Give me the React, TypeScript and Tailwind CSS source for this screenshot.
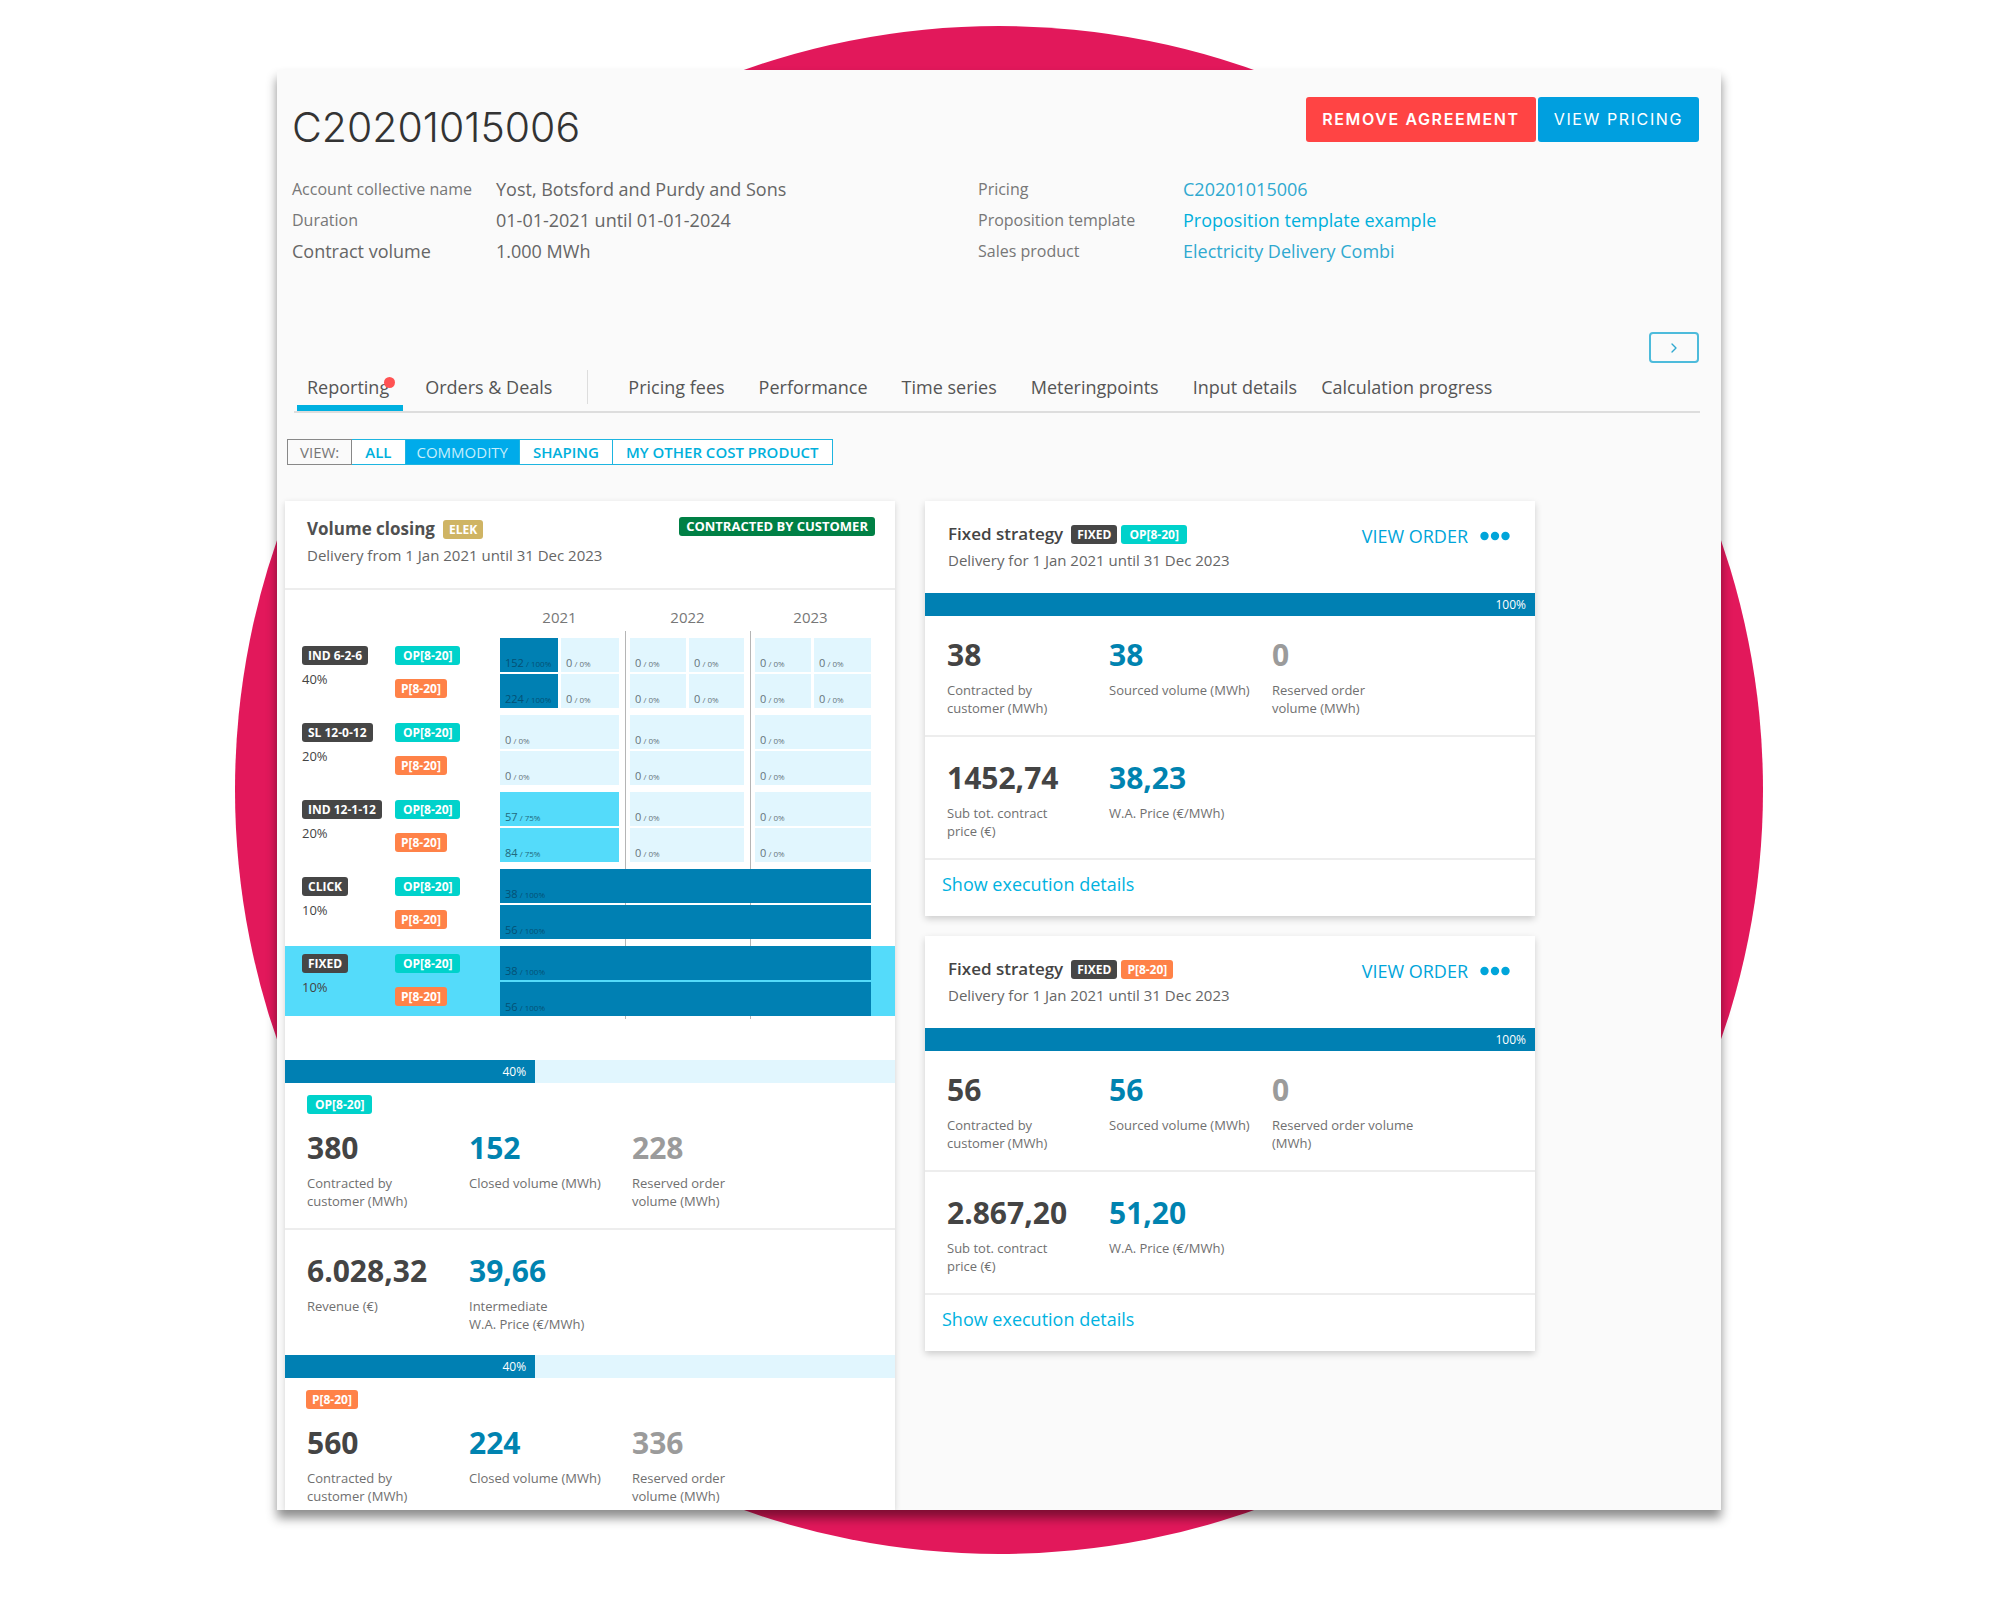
import { Fragment } from 'react';
import type { ReactNode } from 'react';
import clsx from 'clsx';
import { ChevronRight } from 'lucide-react';

type Tone = 'dark' | 'teal' | 'orange' | 'gold' | 'green';

interface Stat {
    value: string;
    label: string;
    color: string;
}

interface Cell {
    volume: number;
    percent: number;
    span: number;
    fill: 'full' | 'partial' | 'empty';
}

interface Strategy {
    name: string;
    share: string;
    offPeak: Cell[];
    peak: Cell[];
    active?: boolean;
}

const OFF_PEAK = 'OP[8-20]';
const PEAK = 'P[8-20]';

const DARK = 'text-[#444444]';
const BLUE = 'text-[#0083b0]';
const GRAY = 'text-[#9b9b9b]';

const tones: Record<Tone, string> = {
    dark: 'bg-[#464646] px-[6px] text-[12px]',
    teal: 'bg-[#00d2cb] px-2 text-[12px]',
    orange: 'bg-[#ff8248] px-[6px] text-[12px]',
    gold: 'bg-[#cfb464] px-[6px] text-[12px]',
    green: 'bg-[#008045] px-[7px] text-[13px]',
};

const fills = {
    full: 'bg-[#0080b3] text-[#045175]',
    partial: 'bg-[#54dbfa] text-[#22697c]',
    empty: 'bg-[#e1f6fe] text-[#66757c]',
};

const emptyCells = (count: number, span: number): Cell[] =>
    Array.from({ length: count }, () => ({ volume: 0, percent: 0, span, fill: 'empty' as const }));

const full = (volume: number, span: number): Cell => ({ volume, percent: 100, span, fill: 'full' });
const partial = (volume: number, percent: number): Cell => ({ volume, percent, span: 2, fill: 'partial' });

const strategies: Strategy[] = [
    {
        name: 'IND 6-2-6',
        share: '40%',
        offPeak: [full(152, 1), ...emptyCells(5, 1)],
        peak: [full(224, 1), ...emptyCells(5, 1)],
    },
    { name: 'SL 12-0-12', share: '20%', offPeak: emptyCells(3, 2), peak: emptyCells(3, 2) },
    {
        name: 'IND 12-1-12',
        share: '20%',
        offPeak: [partial(57, 75), ...emptyCells(2, 2)],
        peak: [partial(84, 75), ...emptyCells(2, 2)],
    },
    { name: 'CLICK', share: '10%', offPeak: [full(38, 6)], peak: [full(56, 6)] },
    { name: 'FIXED', share: '10%', offPeak: [full(38, 6)], peak: [full(56, 6)], active: true },
];

const Badge = ({ tone, children }: { tone: Tone; children: ReactNode }) => (
    <span
        className={clsx(
            'block w-fit rounded-[3px] leading-[19px] font-bold whitespace-nowrap text-white',
            tones[tone]
        )}
    >
        {children}
    </span>
);

const ProgressBar = ({ label, width }: { label: string; width: string }) => (
    <div className="h-[23px] bg-[#e1f6fe]">
        <div
            className="h-full bg-[#0080b3] pr-[9px] text-right text-[12px] leading-[24px] text-white"
            style={{ width }}
        >
            {label}
        </div>
    </div>
);

const Stats = ({ items }: { items: Stat[] }) => (
    <dl className="grid grid-cols-[162px_163px_1fr] pl-[22px]">
        {items.map((item) => (
            <div key={item.label} className="flex flex-col-reverse justify-end">
                <dt className="mt-2 text-[13px] leading-[18px] whitespace-pre-line text-[#707070]">{item.label}</dt>
                <dd className={clsx('text-[30px] leading-[36px] font-bold', item.color)}>{item.value}</dd>
            </div>
        ))}
    </dl>
);

const HalfYearCell = ({ cell, start, last }: { cell: Cell; start: number; last: boolean }) => {
    const end = start + cell.span;
    return (
        <td
            colSpan={cell.span}
            className={clsx(
                'p-0 align-top',
                start % 2 === 1 && 'pl-px',
                start % 2 === 0 && start > 0 && 'pl-[5px]',
                end % 2 === 1 && 'pr-[2px]',
                end % 2 === 0 && end < 6 && 'pr-[6px]',
                last ? 'pb-0' : 'pb-[2px]'
            )}
        >
            <div className={clsx('flex h-[34px] items-end pb-px pl-[5px] text-[11px] leading-[15px]', fills[cell.fill])}>
                <span>
                    {cell.volume}
                    <span className="text-[8px]"> / {cell.percent}%</span>
                </span>
            </div>
        </td>
    );
};

const HalfYearCells = ({ cells, last = false }: { cells: Cell[]; last?: boolean }) => {
    let position = 0;
    return (
        <>
            {cells.map((cell) => {
                const start = position;
                position += cell.span;
                return <HalfYearCell key={start} cell={cell} start={start} last={last} />;
            })}
        </>
    );
};

const StrategyTable = () => (
    <table className="isolate w-full table-fixed border-collapse text-left">
        <colgroup>
            <col className="w-[110px]" />
            <col className="w-[105px]" />
            <col className="w-[60px]" />
            <col className="w-[65px]" />
            <col className="w-[63px]" />
            <col className="w-[62px]" />
            <col className="w-[63px]" />
            <col className="w-[58px]" />
            <col />
        </colgroup>
        <thead>
            <tr className="h-[48px] text-[15px] leading-[20px] text-[#777777]">
                <td colSpan={2} />
                <th colSpan={2} className="pt-[17px] pr-[6px] text-center align-top font-normal">2021</th>
                {/* Year dividers run behind the bars down the whole table */}
                {['2022', '2023'].map((year) => (
                    <th
                        key={year}
                        colSpan={2}
                        className="relative pt-[17px] text-center align-top font-normal before:absolute before:top-[41px] before:left-0 before:-z-10 before:h-[388px] before:w-px before:bg-[#b5b5b5]"
                    >
                        {year}
                    </th>
                ))}
                <td />
            </tr>
        </thead>
        <tbody>
            {strategies.map((strategy, index) => (
                <Fragment key={strategy.name}>
                    {index > 0 && (
                        <tr className="h-[7px]">
                            <td colSpan={9} className="p-0" />
                        </tr>
                    )}
                    <tr className={clsx('h-[36px]', strategy.active && 'bg-[#54dbfa]')}>
                        <th rowSpan={2} className="p-0 pt-2 pl-[17px] align-top font-normal">
                            <Badge tone="dark">{strategy.name}</Badge>
                            <div className="mt-1 text-[13px] leading-[20px] text-[#444444]">{strategy.share}</div>
                        </th>
                        <td className="p-0 pt-2 align-top">
                            <Badge tone="teal">{OFF_PEAK}</Badge>
                        </td>
                        <HalfYearCells cells={strategy.offPeak} />
                        <td />
                    </tr>
                    <tr className={clsx('h-[34px]', strategy.active && 'bg-[#54dbfa]')}>
                        <td className="p-0 pt-[5px] align-top">
                            <Badge tone="orange">{PEAK}</Badge>
                        </td>
                        <HalfYearCells cells={strategy.peak} last />
                        <td />
                    </tr>
                </Fragment>
            ))}
        </tbody>
    </table>
);

const VolumeCard = () => (
    <section className="bg-white shadow-[0_2px_6px_rgba(0,0,0,0.16)]">
        <div className="flex h-[89px] items-start justify-between border-b-2 border-[#ededed] pt-4 pr-5 pl-[22px]">
            <div>
                <div className="flex items-center gap-2">
                    <h2 className="text-[17px] leading-[24px] font-bold text-[#505050]">Volume closing</h2>
                    <Badge tone="gold">ELEK</Badge>
                </div>
                <p className="mt-[3px] text-[15px] leading-[22px] text-[#666666]">Delivery from 1 Jan 2021 until 31 Dec 2023</p>
            </div>
            <Badge tone="green">CONTRACTED BY CUSTOMER</Badge>
        </div>

        <StrategyTable />

        <div className="mt-11">
            <ProgressBar label="40%" width="41%" />
        </div>
        <div className="mb-4 pt-3 pl-[22px]">
            <Badge tone="teal">{OFF_PEAK}</Badge>
        </div>
        <Stats
            items={[
                { value: '380', label: 'Contracted by\ncustomer (MWh)', color: DARK },
                { value: '152', label: 'Closed volume (MWh)', color: BLUE },
                { value: '228', label: 'Reserved order\nvolume (MWh)', color: GRAY },
            ]}
        />
        <div className="mt-[18px] border-t-2 border-[#ededed] pt-[23px] pb-[22px]">
            <Stats
                items={[
                    { value: '6.028,32', label: 'Revenue (€)', color: DARK },
                    { value: '39,66', label: 'Intermediate\nW.A. Price (€/MWh)', color: BLUE },
                ]}
            />
        </div>

        <ProgressBar label="40%" width="41%" />
        <div className="mb-4 pt-3 pl-[21px]">
            <Badge tone="orange">{PEAK}</Badge>
        </div>
        <div className="pb-[5px]">
            <Stats
                items={[
                    { value: '560', label: 'Contracted by\ncustomer (MWh)', color: DARK },
                    { value: '224', label: 'Closed volume (MWh)', color: BLUE },
                    { value: '336', label: 'Reserved order\nvolume (MWh)', color: GRAY },
                ]}
            />
        </div>
    </section>
);

interface StrategyCardProps {
    tone: Tone;
    product: string;
    volumes: Stat[];
    prices: Stat[];
}

const StrategyCard = ({ tone, product, volumes, prices }: StrategyCardProps) => (
    <section className="bg-white shadow-[0_3px_7px_rgba(0,0,0,0.18)]">
        <div className="flex h-[92px] items-start justify-between pt-[21px] pr-[25px] pl-[23px]">
            <div>
                <div className="flex items-center gap-1">
                    <h2 className="mr-1 text-[17px] leading-[24px] font-semibold text-[#444444]">Fixed strategy</h2>
                    <Badge tone="dark">FIXED</Badge>
                    <Badge tone={tone}>{product}</Badge>
                </div>
                <p className="mt-[3px] text-[15px] leading-[22px] text-[#666666]">Delivery for 1 Jan 2021 until 31 Dec 2023</p>
            </div>
            <div className="flex items-center gap-3 text-[#00a5da]">
                <a href="#order" className="text-[18px] leading-[28px]">VIEW ORDER</a>
                <button type="button" aria-label="More actions">
                    <svg width="30" height="10" viewBox="0 0 30 10" fill="currentColor">
                        <circle cx="4.5" cy="5" r="4.2" />
                        <circle cx="15" cy="5" r="4.2" />
                        <circle cx="25.5" cy="5" r="4.2" />
                    </svg>
                </button>
            </div>
        </div>
        <ProgressBar label="100%" width="100%" />
        <div className="pt-[21px] pb-[18px]">
            <Stats items={volumes} />
        </div>
        <div className="border-t-2 border-[#ededed] pt-[23px] pb-[18px]">
            <Stats items={prices} />
        </div>
        <div className="border-t-2 border-[#ededed] px-[17px] pt-3 pb-[19px]">
            <button type="button" className="text-[18px] leading-[24px] font-medium text-[#00b2e0]">
                Show execution details
            </button>
        </div>
    </section>
);

const tabGroups = [
    ['Pricing fees', 'Performance', 'Time series', 'Meteringpoints'],
    ['Input details', 'Calculation progress'],
];

const views = ['ALL', 'COMMODITY', 'SHAPING', 'MY OTHER COST PRODUCT'];

const App = () => (
    <div className="min-h-screen overflow-hidden bg-white pt-[70px] pr-[18px] pb-[91px] pl-4 font-['Open_Sans',sans-serif]">
        <div className="relative mx-auto w-full max-w-[1444px]">
            <div className="absolute -inset-x-[42px] top-1/2 aspect-square -translate-y-1/2 rounded-full bg-[#e2185b]" />

            <main className="relative overflow-hidden bg-[#fafafa] pt-[27px] shadow-[0_8px_10px_rgba(0,0,0,0.45)]">
                {/* Header */}
                <header className="flex items-start justify-between pr-[22px] pl-[15px]">
                    <h1 className="font-['Inter',sans-serif] text-[41px] leading-[60px] font-light text-[#333333]">C20201015006</h1>
                    <div className="flex gap-[2px] font-['Inter',sans-serif] text-[16px] leading-[45px] tracking-widest text-white">
                        <button type="button" className="rounded-[3px] bg-[#ff4444] px-4 font-semibold">REMOVE AGREEMENT</button>
                        <button type="button" className="rounded-[3px] bg-[#009fdf] px-4">VIEW PRICING</button>
                    </div>
                </header>

                <div className="mt-[17px] grid grid-cols-[686px_1fr] pl-[15px] leading-[31px]">
                    <dl className="grid grid-cols-[204px_1fr] content-start text-[18px] text-[#666666]">
                        <dt className="text-[16px] text-[#777777]">Account collective name</dt>
                        <dd>Yost, Botsford and Purdy and Sons</dd>
                        <dt className="text-[16px] text-[#777777]">Duration</dt>
                        <dd>01-01-2021 until 01-01-2024</dd>
                        <dt>Contract volume</dt>
                        <dd>1.000 MWh</dd>
                    </dl>
                    <dl className="grid grid-cols-[205px_1fr] content-start text-[18px] text-[#2fa9d0]">
                        <dt className="text-[16px] text-[#777777]">Pricing</dt>
                        <dd><a href="#pricing">C20201015006</a></dd>
                        <dt className="text-[16px] text-[#777777]">Proposition template</dt>
                        <dd><a href="#template" className="font-medium text-[#00b0dc]">Proposition template example</a></dd>
                        <dt className="text-[16px] text-[#777777]">Sales product</dt>
                        <dd><a href="#product">Electricity Delivery Combi</a></dd>
                    </dl>
                </div>

                <div className="mt-[65px] flex justify-end pr-[22px]">
                    <button
                        type="button"
                        aria-label="Next"
                        className="flex h-[31px] w-[50px] items-center justify-center rounded-[4px] border-2 border-[#4dbbdb] text-[#2fa9d0]"
                    >
                        <ChevronRight size={16} />
                    </button>
                </div>

                {/* Tabs */}
                <nav className="mr-[21px] ml-[17px] flex h-[50px] items-center border-b-2 border-[#dddddd] pl-[3px] text-[18px] leading-[48px] text-[#555555]">
                    <a href="#reporting" className="relative h-[48px] border-b-6 border-[#00b0e0] px-[10px] pr-[14px] font-medium">
                        Reporting
                        <span className="absolute top-[14px] right-2 h-[11px] w-[11px] rounded-full bg-[#ff5252]" />
                    </a>
                    <a href="#orders" className="ml-[22px]">Orders &amp; Deals</a>
                    <span className="mr-10 ml-[35px] h-[34px] w-px bg-[#dddddd]" />
                    <div className="flex gap-[34px]">
                        {tabGroups.map((group, index) => (
                            <div key={group[0]} className={clsx('flex', index === 0 ? 'gap-[34px]' : 'gap-6')}>
                                {group.map((tab) => (
                                    <a key={tab} href="#tab" className="whitespace-nowrap">{tab}</a>
                                ))}
                            </div>
                        ))}
                    </div>
                </nav>

                {/* View filter */}
                <div className="mt-[26px] ml-[10px] flex text-[15px] leading-[24px] font-semibold text-[#00b0dc]">
                    <span className="border border-[#888888] px-3 font-normal text-[#777777]">VIEW:</span>
                    {views.map((view) => (
                        <button
                            key={view}
                            type="button"
                            className={clsx(
                                'border border-l-0 border-[#1db5e0] whitespace-nowrap',
                                view === 'COMMODITY' ? 'bg-[#00abea] px-[11px] font-normal text-[#c4eefc]' : 'bg-white px-[13px]'
                            )}
                        >
                            {view}
                        </button>
                    ))}
                </div>

                <div className="mt-9 ml-2 grid max-w-[1250px] grid-cols-2 items-start gap-[30px]">
                    <VolumeCard />
                    <div className="flex flex-col gap-5">
                        <StrategyCard
                            tone="teal"
                            product={OFF_PEAK}
                            volumes={[
                                { value: '38', label: 'Contracted by\ncustomer (MWh)', color: DARK },
                                { value: '38', label: 'Sourced volume (MWh)', color: BLUE },
                                { value: '0', label: 'Reserved order\nvolume (MWh)', color: GRAY },
                            ]}
                            prices={[
                                { value: '1452,74', label: 'Sub tot. contract\nprice (€)', color: DARK },
                                { value: '38,23', label: 'W.A. Price (€/MWh)', color: BLUE },
                            ]}
                        />
                        <StrategyCard
                            tone="orange"
                            product={PEAK}
                            volumes={[
                                { value: '56', label: 'Contracted by\ncustomer (MWh)', color: DARK },
                                { value: '56', label: 'Sourced volume (MWh)', color: BLUE },
                                { value: '0', label: 'Reserved order volume\n(MWh)', color: GRAY },
                            ]}
                            prices={[
                                { value: '2.867,20', label: 'Sub tot. contract\nprice (€)', color: DARK },
                                { value: '51,20', label: 'W.A. Price (€/MWh)', color: BLUE },
                            ]}
                        />
                    </div>
                </div>
            </main>
        </div>
    </div>
);

export default App;
